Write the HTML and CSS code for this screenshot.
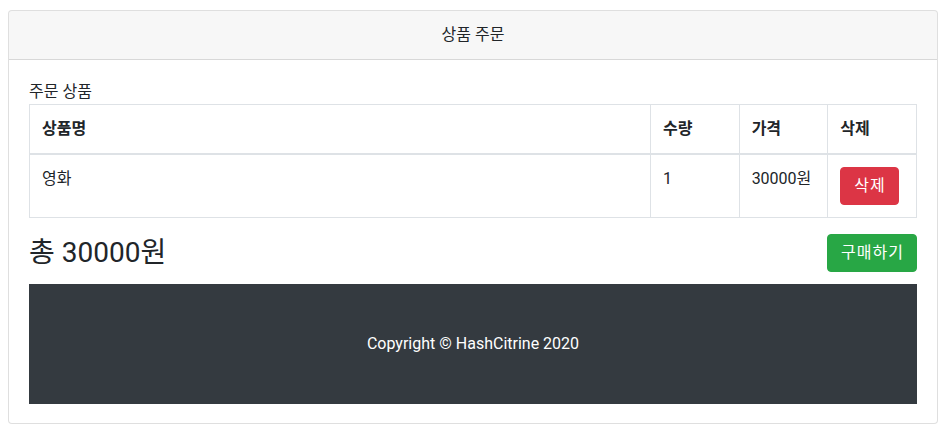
FILE: index.html
```html
<!DOCTYPE html>
<html lang="ko">
<head>
<meta charset="utf-8">
<title>상품 주문</title>
<link rel="stylesheet" href="styles.css">
</head>
<body>
<div class="card">
  <div class="card-header">상품 주문</div>
  <div class="card-body">
    <div class="label">주문 상품</div>
    <table class="table">
      <thead>
        <tr>
          <th>상품명</th>
          <th class="narrow">수량</th>
          <th class="narrow">가격</th>
          <th class="narrow">삭제</th>
        </tr>
      </thead>
      <tbody>
        <tr>
          <td>영화</td>
          <td>1</td>
          <td>30000원</td>
          <td><button class="btn btn-danger">삭제</button></td>
        </tr>
      </tbody>
    </table>
    <div class="total-row">
      <h3 class="total">총 30000원</h3>
      <button class="btn btn-success">구매하기</button>
    </div>
    <footer class="footer">Copyright © HashCitrine 2020</footer>
  </div>
</div>
</body>
</html>
```

FILE: styles.css
```css
* { box-sizing: border-box; }
html, body { margin: 0; padding: 0; }
body {
  font-family: Roboto, "Noto Sans CJK KR", sans-serif;
  font-size: 16px;
  line-height: 1.5;
  color: #212529;
  background: #fff;
  padding: 10px 11px 0 8px;
}
.card {
  width: 930px;
  border: 1px solid rgba(0,0,0,.125);
  border-radius: 4px;
  background: #fff;
}
.card-header {
  padding: 12px 20px;
  text-align: center;
  background: rgba(0,0,0,.03);
  border-bottom: 1px solid rgba(0,0,0,.125);
  border-radius: 3px 3px 0 0;
}
.card-body { padding: 20px 20px 19px; }
.label { height: 24px; }
.table {
  width: 100%;
  border-collapse: collapse;
  margin-bottom: 15px;
}
.table th, .table td {
  border: 1px solid #dee2e6;
  padding: 12px;
  text-align: left;
  vertical-align: top;
}
.table thead th {
  font-weight: 700;
  border-bottom: 2px solid #dee2e6;
}
.table .narrow { width: 10%; }
.btn {
  font-family: inherit;
  font-size: 16px;
  line-height: 24px;
  letter-spacing: 1px;
  padding: 6px 12px 6px 13px;
  border: 1px solid transparent;
  border-radius: 4px;
  color: #fff;
  cursor: pointer;
}
.btn-danger { background: #dc3545; border-color: #dc3545; }
.btn-success { background: #28a745; border-color: #28a745; }
.total-row {
  display: flex;
  justify-content: space-between;
  align-items: center;
  height: 40px;
  margin-bottom: 11px;
}
.total {
  margin: 0;
  font-size: 28px;
  font-weight: 400;
  line-height: 1.2;
}
.footer {
  background: #343a40;
  color: #fff;
  text-align: center;
  padding: 48px 0;
}
```
